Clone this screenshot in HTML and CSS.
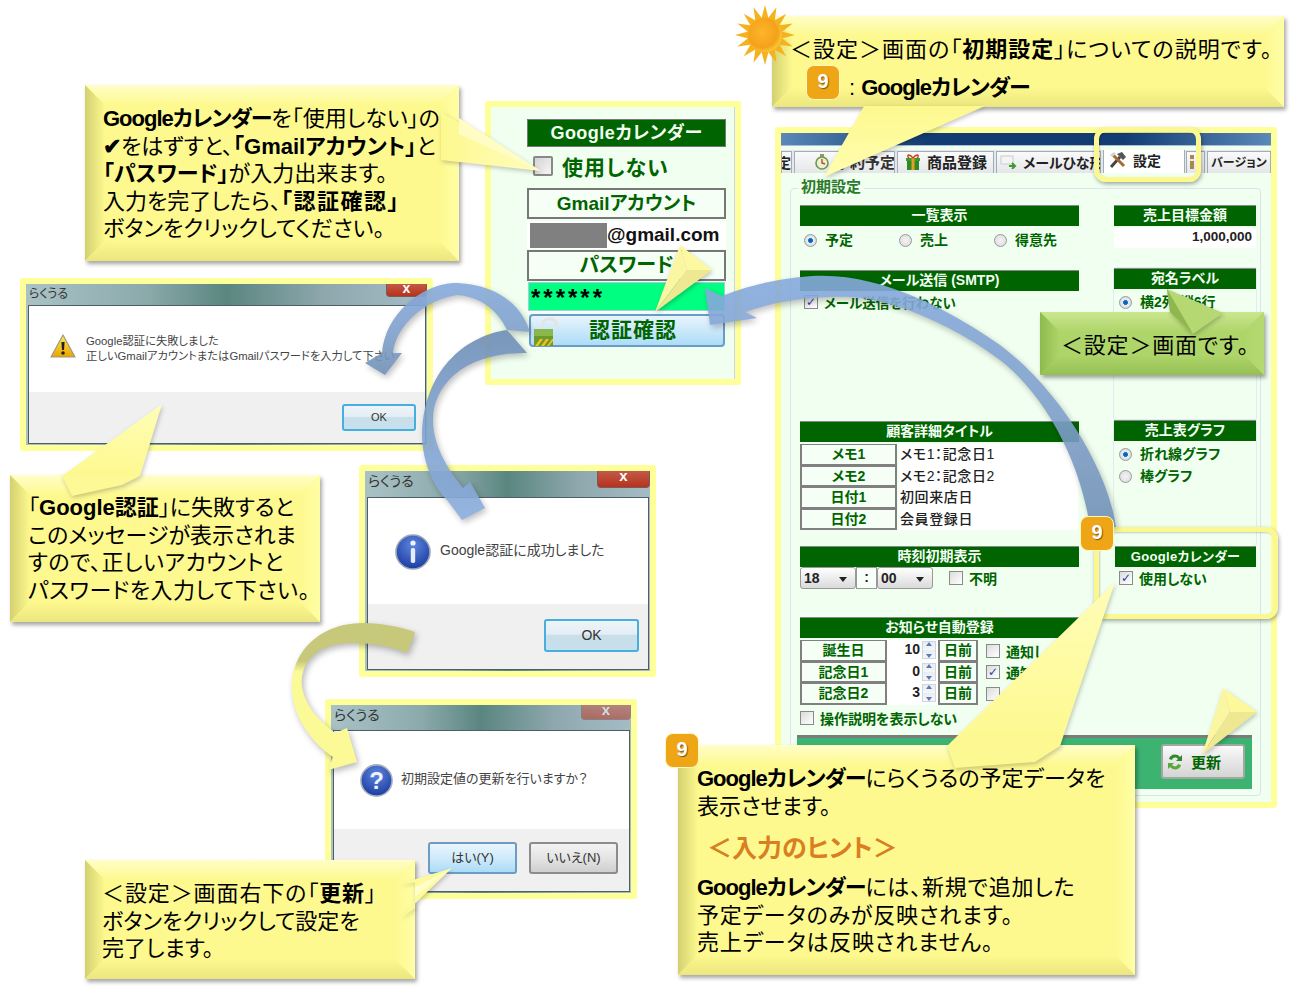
FILE: index.html
```html
<!DOCTYPE html>
<html lang="ja">
<head>
<meta charset="utf-8">
<title>初期設定 Googleカレンダー</title>
<link rel="stylesheet" href="styles.css">
</head>
<body>
<main class="canvas">

  <!-- Google calendar mini panel -->
  <section class="frame gcal">
    <div class="gc-head">Googleカレンダー</div>
    <div class="gc-check"><span class="gc-box"></span><span>使用しない</span></div>
    <div class="gc-label">Gmailアカウント</div>
    <div class="gc-input"><span class="gc-mask"></span><span>@gmail.com</span></div>
    <div class="gc-label gc-label-pw">パスワード</div>
    <div class="gc-pass">******</div>
    <div class="gc-btn">
      <svg class="gc-lock" width="30" height="32" viewBox="0 0 30 32">
        <path d="M10 14 V8 C10 2 21 1 23 7 L23 12" fill="none" stroke="#e4e4e4" stroke-width="3"/>
        <rect x="1" y="13" width="19" height="17" fill="#6c9a2c"/>
        <rect x="1" y="13" width="19" height="7" fill="#8ab84a"/>
        <path d="M2 30 L7 23 H10 L5 30 Z M8 30 L13 23 H16 L11 30 Z M14 30 L19 23 H20 V25 L16 30 Z" fill="#f0c020"/>
      </svg>
      <span>認証確認</span>
    </div>
  </section>

  <!-- Dialogs -->
  <section class="frame dlg dlg-fail">
    <header class="dlg-title"><span>らくうる</span><b class="dlg-x">x</b></header>
    <div class="dlg-box">
      <div class="dlg-msg">
        <svg class="dlg-ico" width="26" height="24" viewBox="0 0 26 24">
          <defs><linearGradient id="warnG" x1="0" y1="0" x2="0" y2="1"><stop offset="0" stop-color="#ffe94d"/><stop offset="1" stop-color="#eba400"/></linearGradient></defs>
          <path d="M13 1 L25 23 H1 Z" fill="url(#warnG)" stroke="#9a9a8a" stroke-width="1.2" stroke-linejoin="round"/>
          <path d="M11.4 8 H14.6 L14 16 H12 Z" fill="#222"/><circle cx="13" cy="19" r="1.8" fill="#222"/>
        </svg>
        <p>Google認証に失敗しました<br>正しいGmailアカウントまたはGmailパスワードを入力して下さい</p>
      </div>
      <footer class="dlg-foot"><span class="btn btn-ok">OK</span></footer>
    </div>
  </section>

  <section class="frame dlg dlg-ok">
    <header class="dlg-title"><span>らくうる</span><b class="dlg-x">x</b></header>
    <div class="dlg-box">
      <div class="dlg-msg">
        <svg class="dlg-ico" width="36" height="36" viewBox="0 0 36 36">
          <defs><radialGradient id="blueG" cx=".5" cy=".3" r=".8"><stop offset="0" stop-color="#5d86dc"/><stop offset="1" stop-color="#12329a"/></radialGradient></defs>
          <circle cx="18" cy="18" r="17" fill="url(#blueG)" stroke="#9aa6b4" stroke-width="1.6"/>
          <circle cx="18" cy="9" r="2.6" fill="#f0f4ff"/><rect x="15.8" y="14" width="4.4" height="15" rx="1.8" fill="#e4ecfa"/>
        </svg>
        <p>Google認証に成功しました</p>
      </div>
      <footer class="dlg-foot"><span class="btn btn-ok">OK</span></footer>
    </div>
  </section>

  <section class="frame dlg dlg-ask">
    <header class="dlg-title"><span>らくうる</span><b class="dlg-x">x</b></header>
    <div class="dlg-box">
      <div class="dlg-msg">
        <svg class="dlg-ico" width="33" height="33" viewBox="0 0 33 33">
          <circle cx="16.5" cy="16.5" r="15.6" fill="url(#blueG)" stroke="#a6b0bc" stroke-width="1.6"/>
          <text x="16.5" y="25" text-anchor="middle" class="ask-mark">?</text>
        </svg>
        <p>初期設定値の更新を行いますか？</p>
      </div>
      <footer class="dlg-foot"><span class="btn btn-yes">はい(Y)</span><span class="btn btn-no">いいえ(N)</span></footer>
    </div>
  </section>

  <!-- Application settings window -->
  <section class="frame app">
    <div class="app-bar"></div>
    <nav class="tabs">
      <span class="tab t-a">定</span>
      <span class="tab t-b">
        <svg width="14" height="16" viewBox="0 0 14 16"><circle cx="7" cy="9" r="6" fill="#e8f0d8" stroke="#6a9a40" stroke-width="1.6"/><path d="M7 5 V9 L10 10" stroke="#d04020" stroke-width="1.4" fill="none"/><rect x="5" y="0" width="4" height="3" fill="#8a9a70"/></svg>
        <span>予約予定</span></span>
      <span class="tab t-c">
        <svg width="16" height="17" viewBox="0 0 16 17"><rect x="1" y="5" width="14" height="3" fill="#3c9a30"/><rect x="2" y="8" width="12" height="9" fill="#2e8a28"/><rect x="6.5" y="5" width="3" height="12" fill="#e6a020"/><path d="M8 5 C4 0 1 2 4 5 M8 5 C12 0 15 2 12 5" fill="none" stroke="#d04020" stroke-width="1.4"/></svg>
        <span>商品登録</span></span>
      <span class="tab t-d">
        <svg width="18" height="14" viewBox="0 0 18 14"><rect x="1" y="1" width="12" height="8" fill="#f4f4f4" stroke="#ccc"/><path d="M9 11 H15 M12 8 L15 11 L12 14" fill="none" stroke="#3c9a30" stroke-width="2"/></svg>
        <span>メールひな形</span></span>
      <span class="tab t-e">
        <svg width="18" height="18" viewBox="0 0 18 18"><path d="M2 16 L11 6" stroke="#444" stroke-width="3"/><path d="M8 3 L13 1 L17 6 L14 9 Z" fill="#555"/><path d="M3 3 L15 15" stroke="#a86a30" stroke-width="3"/><path d="M1 4 L5 1 L7 3 L3 6 Z" fill="#cfd6dc"/></svg>
        <span>設定</span></span>
      <span class="tab t-f"><svg width="6" height="16" viewBox="0 0 6 16"><rect x="1" y="1" width="4" height="14" fill="#a8884a"/><rect x="1" y="5" width="4" height="2" fill="#e8e8e8"/></svg></span>
      <span class="tab t-g">バージョン</span>
    </nav>
    <div class="app-body">
      <div class="group">
        <span class="legend">初期設定</span>
        <div class="cols">
          <div class="col col-l">
            <div class="sec s-list">
              <div class="sec-h">一覧表示</div>
              <div class="radios">
                <label class="r r1"><i class="rad on"></i>予定</label>
                <label class="r r1"><i class="rad"></i>売上</label>
                <label class="r"><i class="rad"></i>得意先</label>
              </div>
            </div>
            <div class="sec s-mail">
              <div class="sec-h">メール送信 (SMTP)</div>
              <label class="line"><i class="chk on">✓</i>メール送信を行わない</label>
            </div>
            <div class="sec s-cust">
              <div class="sec-h sec-h-gap">顧客詳細タイトル</div>
              <div class="kv"><span class="cell">メモ1</span><span class="inp">メモ1：記念日1</span></div>
              <div class="kv"><span class="cell">メモ2</span><span class="inp">メモ2：記念日2</span></div>
              <div class="kv"><span class="cell">日付1</span><span class="inp">初回来店日</span></div>
              <div class="kv"><span class="cell">日付2</span><span class="inp">会員登録日</span></div>
            </div>
            <div class="sec s-time">
              <div class="sec-h">時刻初期表示</div>
              <div class="time">
                <span class="sel">18<i></i></span><span class="colon">:</span><span class="sel">00<i></i></span>
                <label class="line l-unk"><i class="chk"></i>不明</label>
              </div>
            </div>
            <div class="sec s-note">
              <div class="sec-h sec-h-gap">お知らせ自動登録</div>
              <div class="nrow"><span class="cell">誕生日</span><span class="num">10<i class="spin"></i></span><span class="cell c-day">日前</span><label class="line"><i class="chk"></i>通知しない</label></div>
              <div class="nrow"><span class="cell">記念日1</span><span class="num">0<i class="spin"></i></span><span class="cell c-day">日前</span><label class="line"><i class="chk on">✓</i>通知しない</label></div>
              <div class="nrow"><span class="cell">記念日2</span><span class="num">3<i class="spin"></i></span><span class="cell c-day">日前</span><label class="line"><i class="chk"></i>通知しない</label></div>
            </div>
            <label class="line l-help"><i class="chk"></i>操作説明を表示しない</label>
          </div>
          <div class="col col-r">
            <div class="sec s-goal">
              <div class="sec-h">売上目標金額</div>
              <div class="money">1,000,000</div>
            </div>
            <div class="sec s-addr sec-box">
              <div class="sec-h">宛名ラベル</div>
              <label class="r r-s"><i class="rad on"></i>横2列 縦6行</label>
            </div>
            <div class="sec s-graph sec-box">
              <div class="sec-h">売上表グラフ</div>
              <label class="r r-s"><i class="rad on"></i>折れ線グラフ</label>
              <label class="r r-s"><i class="rad"></i>棒グラフ</label>
            </div>
            <div class="sec s-gc">
              <div class="sec-h sec-h-gc">Googleカレンダー</div>
              <label class="line l-gc"><i class="chk on">✓</i>使用しない</label>
            </div>
          </div>
        </div>
        <div class="savebar">
          <span class="save">
            <svg width="18" height="20" viewBox="0 0 18 20"><path d="M3 7 C4 2 11 1 14 5 L16 3 V9 H10 L12 7 C10 5 7 5 6 8 Z" fill="#2f8a2a"/><path d="M15 13 C14 18 7 19 4 15 L2 17 V11 H8 L6 13 C8 15 11 15 12 12 Z" fill="#5aa83a"/></svg>
            <span>更新</span>
          </span>
        </div>
      </div>
    </div>
  </section>

  <div class="ring ring-tab"></div>
  <div class="ring ring-gc"></div>

  <!-- Curved arrows -->
  <svg class="layer" width="1300" height="992" viewBox="0 0 1300 992">
    <defs>
      <linearGradient id="blueA" x1="0" y1="0" x2="0" y2="1"><stop offset="0" stop-color="#86aadd"/><stop offset=".55" stop-color="#7f9fca"/><stop offset="1" stop-color="#7090b4"/></linearGradient>
      <linearGradient id="blueB" x1="0" y1="0" x2="0" y2="1"><stop offset="0" stop-color="#6d8cb4"/><stop offset=".4" stop-color="#7c9fcc"/><stop offset="1" stop-color="#8aacdc"/></linearGradient>
      <linearGradient id="olive" x1="0" y1="0" x2="0" y2="1"><stop offset="0" stop-color="#c6c87a"/><stop offset=".26" stop-color="#c8c87a"/><stop offset=".33" stop-color="#fafa96"/><stop offset="1" stop-color="#fbfa96"/></linearGradient>
    </defs>
    <g class="arrow arrow-blue">
      <path d="M1116 527 C1108 470 1060 390 1000 345 C950 310 880 272 812 276 C780 278 750 285 722 296 L705 288 L710 325 L757 318 L745 312 C780 300 815 296 850 297 C900 300 960 330 1000 360 C1045 395 1080 460 1090 527 Z" fill="url(#blueA)"/>
      <path d="M530 332 C520 300 490 283 453 283 C420 285 385 315 382 353 L365 363 L385 375 L402 353 L393 353 C396 325 425 300 457 295 C485 297 500 315 507 330 Z" fill="url(#blueA)"/>
      <path d="M507 330 C470 335 425 365 422 433 C422 460 432 485 447 500 L462 520 L485 508 L470 482 L463 488 C447 468 433 445 433 420 C433 385 465 352 527 353 Z" fill="url(#blueB)"/>
    </g>
    <g class="arrow">
      <path d="M415 632 C385 622 350 618 325 632 C300 645 290 670 292 693 C295 722 315 745 333 757 L328 770 L357 762 L347 728 L335 733 C318 720 305 705 302 687 C300 668 310 652 330 646 C350 640 385 643 407 653 Z" fill="url(#olive)"/>
    </g>
  </svg>

  <!-- Callouts -->
  <aside class="callout c-gmail">
    <i class="bv bt"></i><i class="bv bl"></i><i class="bv br"></i><i class="bv bb"></i>
    <p><b class="tight">Googleカレンダー</b>を「使用しない」の<br><b>✔</b>をはずすと、<b>「Gmailアカウント」</b>と<br><b>「パスワード」</b>が入力出来ます。<br>入力を完了したら、<b class="wide">「認証確認」</b><br>ボタンをクリックしてください。</p>
  </aside>
  <aside class="callout c-top">
    <i class="bv bt"></i><i class="bv bl"></i><i class="bv br"></i><i class="bv bb"></i>
    <p><span class="c-top-main">＜設定＞画面の「<b>初期設定</b>」についての説明です。</span><br><span class="c-top-sub">: <b class="tight">Googleカレンダー</b></span></p>
  </aside>
  <aside class="callout c-fail">
    <i class="bv bt"></i><i class="bv bl"></i><i class="bv br"></i><i class="bv bb"></i>
    <p>「<b>Google認証</b>」に失敗すると<br>このメッセージが表示されま<br><span class="wide-s">すので、正しいアカウントと</span><br><span class="wide-s">パスワードを入力して下さい。</span></p>
  </aside>
  <aside class="callout c-save">
    <i class="bv bt"></i><i class="bv bl"></i><i class="bv br"></i><i class="bv bb"></i>
    <p><span class="c-save-first">＜設定＞画面右下の「<b>更新</b>」</span><br>ボタンをクリックして設定を<br>完了します。</p>
  </aside>
  <aside class="callout c-hint">
    <i class="bv bt"></i><i class="bv bl"></i><i class="bv br"></i><i class="bv bb"></i>
    <p><b class="tight">Googleカレンダー</b>にらくうるの予定データを<br>表示させます。</p>
    <h2 class="hint">＜入力のヒント＞</h2>
    <p class="hint-body"><b class="tight">Googleカレンダー</b>には、新規で追加した<br>予定データのみが反映されます。<br>売上データは反映されません。</p>
  </aside>
  <aside class="callout c-green">
    <i class="bv bt"></i><i class="bv bl"></i><i class="bv br"></i><i class="bv bb"></i>
    <p>＜設定＞画面です。</p>
  </aside>

  <!-- Callout tails, pointers, sun -->
  <svg class="layer" width="1300" height="992" viewBox="0 0 1300 992">
    <defs>
      <linearGradient id="tailH" x1="0" y1="0" x2="1" y2="0"><stop offset="0" stop-color="#fdf98f"/><stop offset="1" stop-color="#fffcc0"/></linearGradient>
      <linearGradient id="tailV" x1="0" y1="1" x2="0" y2="0"><stop offset="0" stop-color="#fdf98f"/><stop offset="1" stop-color="#fffdb8"/></linearGradient>
      <linearGradient id="tailU" x1="0" y1="0" x2="0" y2="1"><stop offset="0" stop-color="#fdf98f"/><stop offset="1" stop-color="#fffdb0"/></linearGradient>
      <radialGradient id="sunG" cx=".42" cy=".42" r=".6"><stop offset="0" stop-color="#ffb52a"/><stop offset=".75" stop-color="#f4a11a"/><stop offset="1" stop-color="#f8c838"/></radialGradient>
      <polygon id="ray" points="765,5 761,20 769,20" fill="#f6b21e"/>
    </defs>
    <g class="tail">
      <polygon points="441,112 541,171 441,160" fill="url(#tailH)"/>
      <polygon points="459,118 541,171 459,134" fill="#fffdc4"/>
      <polygon points="864,106 985,106 824,177" fill="url(#tailU)"/>
      <polygon points="62,476 140,476 162,404" fill="url(#tailV)"/>
      <polygon points="62,476 72,496 122,485 140,476" fill="#fcf996"/>
      <polygon points="400,884 415,882 415,908 400,918 452,868" fill="#fdfa9a"/>
      <polygon points="415,887 452,868 415,897" fill="#fffdc8"/>
      <polygon points="947,746 1060,746 1115,582" fill="url(#tailV)"/>
      <polygon points="947,746 955,768 1035,762 1060,746" fill="#fcf992"/>
      <polygon points="1167,289 1170,312 1193,334 1223,313" fill="#b5d873"/>
      <polygon points="1167,289 1170,312 1193,334" fill="#8fb74e"/>
    </g>
    <g class="tail">
      <polygon points="655,312 680,245 687,270" fill="#fbf6a2"/>
      <polygon points="655,312 687,270 712,270" fill="#efe892"/>
      <polygon points="680,245 687,270 712,270" fill="#fdf9a0"/>
      <polygon points="1202,755 1223,688 1230,712" fill="#fbf6a2"/>
      <polygon points="1202,755 1230,712 1257,712" fill="#efe892"/>
      <polygon points="1223,688 1230,712 1257,712" fill="#fdf99a"/>
    </g>
    <g>
      <use href="#ray"/><use href="#ray" transform="rotate(22.5 765 35)"/><use href="#ray" transform="rotate(45 765 35)"/><use href="#ray" transform="rotate(67.5 765 35)"/>
      <use href="#ray" transform="rotate(90 765 35)"/><use href="#ray" transform="rotate(112.5 765 35)"/><use href="#ray" transform="rotate(135 765 35)"/><use href="#ray" transform="rotate(157.5 765 35)"/>
      <use href="#ray" transform="rotate(180 765 35)"/><use href="#ray" transform="rotate(202.5 765 35)"/><use href="#ray" transform="rotate(225 765 35)"/><use href="#ray" transform="rotate(247.5 765 35)"/>
      <use href="#ray" transform="rotate(270 765 35)"/><use href="#ray" transform="rotate(292.5 765 35)"/><use href="#ray" transform="rotate(315 765 35)"/><use href="#ray" transform="rotate(337.5 765 35)"/>
      <circle cx="765" cy="35" r="17" fill="url(#sunG)"/>
    </g>
  </svg>

  <span class="badge b-top">9</span>
  <span class="badge b-gc">9</span>
  <span class="badge b-hint">9</span>
</main>
</body>
</html>
```

FILE: styles.css
```css
* { box-sizing: border-box; }
html, body { margin: 0; padding: 0; background: #fff; }
body { font-family: "Liberation Sans", "Noto Sans CJK JP", sans-serif; font-feature-settings: "palt"; }
p, h2 { margin: 0; }
i { font-style: normal; }

.canvas { position: relative; width: 1300px; height: 992px; overflow: hidden; background: #fff; }
.layer { position: absolute; left: 0; top: 0; pointer-events: none; }
.arrow { filter: drop-shadow(2px 3px 3px rgba(0,0,0,.28)); }
.arrow-blue { opacity: .9; }
.tail { filter: drop-shadow(1px 2px 2px rgba(0,0,0,.22)); }

.frame { position: absolute; border: 6px solid #ffff99; border-radius: 3px; }

/* ---------- Mini Google panel ---------- */
.gcal { left: 485px; top: 101px; width: 256px; height: 284px; background: #f0fff0; padding: 12px 9px 0 36px; color: #006400; font-weight: 700; box-shadow: inset -1px 0 0 #c8d4f0; }
.gc-head { height: 28px; background: #006400; color: #f2fff2; border: 1px solid #777; font-size: 18px; line-height: 26px; text-align: center; letter-spacing: .5px; }
.gc-check { height: 41px; display: flex; align-items: center; gap: 9px; padding: 0 0 4px 6px; font-size: 21px; letter-spacing: 1px; }
.gc-box { width: 20px; height: 20px; border: 2px solid #888; border-radius: 2px; background: linear-gradient(135deg, #d4d4d4, #f6f6f6); }
.gc-label { height: 31px; border: 2px solid #777; background: #f6fff6; text-align: center; font-size: 19px; line-height: 27px; }
.gc-label-pw { margin-top: 1px; font-size: 20px; }
.gc-input { margin-top: 2px; height: 28px; background: #fff; display: flex; align-items: center; padding-left: 3px; color: #111; font-size: 19px; }
.gc-mask { width: 77px; height: 25px; background: #808080; }
.gc-pass { margin-top: 2px; margin-left: 2px; width: 195px; height: 27px; background: #00ff80; color: #000; font-size: 24px; line-height: 30px; padding-left: 2px; letter-spacing: 3px; outline: 1px solid #a8c8e8; }
.gc-btn { margin-top: 4px; margin-left: 2px; width: 196px; height: 33px; display: flex; align-items: center; justify-content: center; padding: 0 0 5px 12px; font-size: 21px; border: 2px solid #6a9cc8; border-radius: 4px; background: linear-gradient(#e8f4fc, #aedcf8); position: relative; letter-spacing: 1px; }
.gc-lock { position: absolute; left: 2px; top: 0; }

/* ---------- Dialogs ---------- */
.dlg { display: flex; flex-direction: column; background: linear-gradient(90deg, #a9c2c6, #8caaab 30%, #5a8680 50%, #8fa8ae 75%, #a5bcc6); color: #333; }
.dlg-title { display: flex; justify-content: space-between; align-items: flex-start; padding: 0 0 0 3px; font-size: 14px; }
.dlg-title span { line-height: 20px; }
.dlg-x { height: 17px; width: 53px; background: linear-gradient(#c05a48, #b8321c); border: 1px solid #7a5a58; border-top: 0; border-radius: 0 0 4px 4px; color: #fff; font-size: 15px; line-height: 10px; text-align: center; display: block; }
.dlg-box { flex: 1; margin: 0 1px 1px 2px; border: 1px solid #4d5e66; background: #fff; display: flex; flex-direction: column; }
.dlg-msg { flex: 1; display: flex; align-items: flex-start; }
.dlg-ico { flex: none; }
.dlg-foot { background: #f0f0f0; display: flex; justify-content: flex-end; align-items: flex-start; }
.btn { display: block; text-align: center; color: #333; }
.btn-ok { border: 2px solid #47aee0; border-radius: 3px; background: linear-gradient(#eef4f8, #e4eef4 45%, #c9dfe9 50%, #c6e0ec); }

.dlg-fail { left: 20px; top: 278px; width: 413px; height: 173px; }
.dlg-fail .dlg-title { height: 21px; font-size: 12px; }
.dlg-fail .dlg-x { width: 41px; height: 13px; line-height: 8px; font-size: 14px; }
.dlg-fail .dlg-msg { padding: 28px 0 0 21px; gap: 10px; font-size: 11.3px; line-height: 15px; color: #444; white-space: nowrap; }
.dlg-fail .dlg-foot { height: 51px; padding: 12px 9px 0 0; }
.dlg-fail .btn-ok { width: 74px; height: 27px; font-size: 11px; line-height: 22px; }

.dlg-ok { left: 359px; top: 465px; width: 297px; height: 212px; }
.dlg-ok .dlg-title { height: 26px; }
.dlg-ok .dlg-msg { padding: 36px 0 0 27px; gap: 9px; font-size: 14px; line-height: 32px; color: #444; }
.dlg-ok .dlg-foot { height: 65px; padding: 15px 9px 0 0; }
.dlg-ok .btn-ok { width: 95px; height: 33px; font-size: 14px; line-height: 28px; }

.dlg-ask { left: 325px; top: 699px; width: 312px; height: 200px; }
.dlg-ask .dlg-title { height: 25px; }
.dlg-ask .dlg-x { opacity: .55; width: 50px; height: 15px; }
.dlg-ask .dlg-msg { padding: 33px 0 0 26px; gap: 8px; font-size: 13px; line-height: 30px; color: #444; }
.dlg-ask .dlg-foot { height: 62px; padding: 13px 11px 0 0; gap: 12px; }
.btn-yes, .btn-no { width: 89px; height: 32px; font-size: 13px; line-height: 28px; border-radius: 3px; }
.btn-yes { border: 2px solid #6c9cc4; background: linear-gradient(#e8f6fe, #cfeafa 50%, #abdcf8); }
.btn-no { border: 2px solid #8c8c8c; background: linear-gradient(#f3f3f3, #e4e4e4 50%, #cfcfcf); }
.ask-mark { fill: #eef2fa; font: 700 24px "Liberation Sans", sans-serif; }

/* ---------- App window ---------- */
.app { left: 775px; top: 127px; width: 502px; height: 681px; background: #f0fff0; display: flex; flex-direction: column; font-weight: 700; color: #006400; font-size: 14px; }
.app-bar { flex: none; height: 12px; background: linear-gradient(90deg, #5a88b8, #123c72 30%, #123c72 70%, #5a88b8); box-shadow: 0 1px 0 #a8bed4; }
.tabs { flex: none; display: flex; height: 23px; margin-top: 5px; background: #e2e8ee; align-items: flex-end; color: #222; white-space: nowrap; overflow: hidden; position: relative; }
.tab { flex: none; height: 22px; display: flex; align-items: center; gap: 6px; padding-bottom: 2px; background: linear-gradient(#fafafa, #e4e6e8); border: 1px solid #a4acb4; border-bottom: 0; margin-right: 2px; overflow: hidden; font-size: 15px; }
.tab svg { flex: none; }
.t-a { width: 11px; justify-content: flex-end; font-size: 14px; }
.t-b { width: 101px; padding-left: 20px; color: #333; }
.t-c { width: 97px; padding-left: 7px; }
.t-d { width: 105px; padding-left: 3px; gap: 5px; font-size: 14px; }
.t-e { width: 82px; height: 25px; padding-left: 5px; background: #fff; margin-right: 1px; font-size: 14px; }
.t-f { width: 19px; padding-left: 2px; }
.t-g { width: 64px; justify-content: center; font-size: 12px; }

.app-body { flex: 1; padding: 15px 10px 6px 9px; display: flex; }
.group { flex: 1; border: 1px solid #d9e4ec; border-radius: 4px; display: flex; flex-direction: column; padding: 0 0 6px 6px; }
.legend { display: block; width: max-content; margin: -12px 0 0 1px; padding: 0 3px; background: #f0fff0; font-size: 15px; line-height: 20px; color: #2c7a2c; }
.cols { display: flex; gap: 35px; padding: 8px 0 0 3px; }
.col { display: flex; flex-direction: column; flex: none; }
.col-l { width: 279px; }
.col-r { width: 142px; }
.sec { position: relative; }
.sec-box { box-shadow: 0 0 0 1px #e2eaf2; border-radius: 3px; }
.sec-h { height: 21px; background: #006400; border-top: 1px solid #888; color: #f4fff4; text-align: center; font-size: 14px; line-height: 19px; }
.sec-h-gap { margin-bottom: 2px; }
.s-list { height: 65px; }
.s-mail { height: 151px; }
.s-cust { height: 125px; }
.s-time { height: 71px; }
.s-note { height: 91px; }
.s-goal { height: 63px; }
.s-addr { height: 152px; }
.s-graph { height: 126px; }
.s-gc { height: 80px; margin-left: 1px; }

.chk { flex: none; width: 14px; height: 14px; border: 1px solid #8a8a8a; background: linear-gradient(135deg, #dcdcdc, #fff); display: inline-block; font: 700 12px/12px "DejaVu Sans", sans-serif; color: #2a3ea8; text-align: center; }
.rad { flex: none; width: 13px; height: 13px; border-radius: 50%; border: 1px solid #9a9a9a; background: radial-gradient(circle, #f4f4f4, #d8d8d8); display: inline-block; }
.rad.on { background: radial-gradient(circle, #0a58c0 0, #1a70c0 28%, #e8f0f4 34%, #c8d0d4 100%); }

.radios { display: flex; padding: 4px 0 0 4px; }
.r { display: flex; align-items: center; gap: 8px; line-height: 20px; }
.r1 { width: 95px; }
.r-s { padding-left: 5px; height: 22px; margin-top: 2px; }
.r-s + .r-s { margin-top: 0; }
.line { display: flex; align-items: center; gap: 6px; white-space: nowrap; }
.s-mail .line { padding: 1px 0 0 4px; font-size: 13.5px; }

.kv { display: flex; height: 21.5px; }
.cell { width: 97px; flex: none; border: 2px solid #808080; border-top-width: 1px; background: #f6fff6; text-align: center; line-height: 19px; font-size: 14px; }
.inp { flex: 1; margin-left: 2px; margin-right: 1px; background: #fff; color: #222; padding-left: 1px; font-size: 14px; line-height: 20px; font-weight: 500; letter-spacing: .6px; }

.time { display: flex; align-items: flex-start; }
.sel { width: 56px; height: 22px; border: 1px solid #999; border-radius: 3px; background: linear-gradient(#fff, #dadada); color: #222; padding-left: 3px; line-height: 20px; position: relative; display: block; }
.sel i { position: absolute; right: 8px; top: 9px; border: 4px solid transparent; border-top: 5px solid #222; border-bottom: 0; }
.colon { width: 21px; height: 22px; border: 1px solid #999; background: #f8fff8; text-align: center; line-height: 18px; color: #222; display: block; }
.l-unk { padding: 1px 0 0 16px; }

.nrow { display: flex; height: 21.5px; }
.nrow .cell { width: 87px; }
.nrow .c-day { width: 40px; }
.num { width: 51px; background: #fff; color: #222; text-align: right; padding-right: 18px; line-height: 18px; position: relative; font-size: 14px; flex: none; }
.spin { position: absolute; right: 2px; top: 1px; width: 14px; height: 18px; background: linear-gradient(#e8eef4, #f4f6f8 48%, #b8c4d0 50%, #e8eef4 52%, #f4f6f8); border: 1px solid #d0d6dc; }
.spin::before, .spin::after { content: ""; position: absolute; left: 3px; border: 3px solid transparent; }
.spin::before { top: 0; border-top: 0; border-bottom: 4px solid #5a7ab0; }
.spin::after { bottom: 0; border-bottom: 0; border-top: 4px solid #5a7ab0; }
.nrow .line { padding-left: 8px; }
.l-help { height: 20px; }

.money { margin-top: 2px; height: 20px; background: #fff; color: #222; text-align: right; padding-right: 4px; font-size: 13.5px; line-height: 18px; }
.l-gc { padding: 1px 0 0 4px; }
.sec-h-gc { font-size: 13px; letter-spacing: .3px; }

.savebar { flex: none; margin-top: auto; width: 455px; height: 54px; background: #3cb371; border-top: 3px solid #7c7c7c; padding: 6px 7px 0 0; display: flex; justify-content: flex-end; }
.save { width: 84px; height: 35px; border: 2px solid #a0a8a0; border-radius: 3px; background: linear-gradient(#fafafa, #d4d4d4); display: flex; align-items: center; gap: 7px; padding-left: 3px; font-size: 15px; }

/* ---------- Highlight rings ---------- */
.ring { position: absolute; border: 5px solid #faf88e; border-radius: 12px; box-shadow: 1px 2px 4px rgba(0,0,0,.35), inset 1px 1px 2px rgba(0,0,0,.2); }
.ring-tab { left: 1094px; top: 127px; width: 107px; height: 55px; }
.ring-gc { left: 1094px; top: 527px; width: 184px; height: 92px; }

/* ---------- Callouts ---------- */
.callout { --f: #fdf98f; --t: #fffec8; --l: #d3d070; --r: #fffea6; --b: #ebe77e; --w: 20px; position: absolute; background: var(--f); box-shadow: 2px 3px 4px rgba(0,0,0,.35); color: #000; font-size: 22px; line-height: 27.5px; white-space: nowrap; }
.callout p, .callout h2 { position: relative; }
.bv { position: absolute; }
.bt { left: 0; right: 0; top: 0; height: var(--w); background: linear-gradient(180deg, var(--t), var(--f)); clip-path: polygon(0 0, 100% 0, calc(100% - var(--w)) 100%, var(--w) 100%); }
.bb { left: 0; right: 0; bottom: 0; height: var(--w); background: linear-gradient(0deg, var(--b), var(--f)); clip-path: polygon(var(--w) 0, calc(100% - var(--w)) 0, 100% 100%, 0 100%); }
.bl { left: 0; top: 0; bottom: 0; width: var(--w); background: linear-gradient(90deg, var(--l), var(--f)); clip-path: polygon(0 0, 100% var(--w), 100% calc(100% - var(--w)), 0 100%); }
.br { right: 0; top: 0; bottom: 0; width: var(--w); background: linear-gradient(270deg, var(--r), var(--f)); clip-path: polygon(100% 0, 100% 100%, 0 calc(100% - var(--w)), 0 var(--w)); }
.tight { letter-spacing: -1px; }
.wide { letter-spacing: 1.5px; }
.wide-s { letter-spacing: .5px; }

.c-gmail { left: 85px; top: 85px; width: 374px; height: 176px; padding: 20px 0 0 18px; }
.c-top { left: 772px; top: 16px; width: 512px; height: 91px; padding: 15px 0 0 18px; line-height: 38px; }
.c-top-main { letter-spacing: 1px; }
.c-top-sub { display: inline-block; padding-left: 59px; }
.c-fail { left: 10px; top: 475px; width: 310px; height: 147px; padding: 19px 0 0 18px; }
.c-save { left: 85px; top: 860px; width: 330px; height: 119px; padding: 20px 0 0 17px; }
.c-save-first { letter-spacing: .9px; }
.c-hint { left: 678px; top: 745px; width: 457px; height: 230px; padding: 20px 0 0 19px; }
.hint { font-size: 25px; line-height: 32px; font-weight: 700; color: #d97f22; margin: 12px 0 10px 10px; }
.hint-body { letter-spacing: .8px; }
.c-green { --f: #aed56a; --t: #cbe68f; --l: #8dba4e; --r: #b6da72; --b: #95bf54; left: 1040px; top: 312px; width: 224px; height: 63px; padding: 20px 0 0 21px; letter-spacing: .8px; }

.badge { position: absolute; width: 34px; height: 35px; border-radius: 8px; background: #eea616; border: 1px solid #fdf7c0; color: #fff; font: 700 20px/31px "Liberation Sans", sans-serif; text-align: center; text-shadow: 1px 1px 1px #7a5a10; }
.b-top { left: 806px; top: 65px; }
.b-gc { left: 1080px; top: 516px; }
.b-hint { left: 665px; top: 733px; }
```
